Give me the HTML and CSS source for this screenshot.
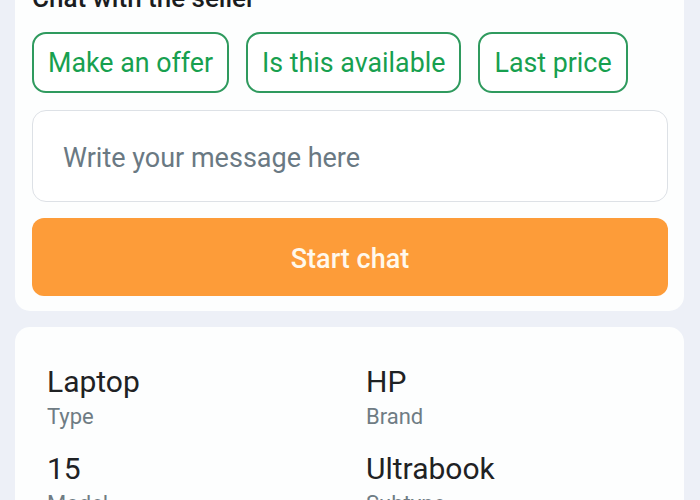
FILE: index.html
```html
<!DOCTYPE html>
<html lang="en">
<head>
<meta charset="utf-8">
<title>Chat with the seller</title>
<link rel="stylesheet" href="styles.css">
</head>
<body>
<main class="page">
  <section class="card chat-card">
    <h2 class="chat-title">Chat with the seller</h2>
    <div class="chips">
      <button class="chip" type="button">Make an offer</button>
      <button class="chip" type="button">Is this available</button>
      <button class="chip" type="button">Last price</button>
    </div>
    <textarea class="message" rows="1" placeholder="Write your message here"></textarea>
    <button class="start-btn" type="button">Start chat</button>
  </section>
  <section class="card specs-card">
    <div class="spec">
      <div class="spec-value">Laptop</div>
      <div class="spec-label">Type</div>
    </div>
    <div class="spec">
      <div class="spec-value">HP</div>
      <div class="spec-label">Brand</div>
    </div>
    <div class="spec">
      <div class="spec-value">15</div>
      <div class="spec-label">Model</div>
    </div>
    <div class="spec">
      <div class="spec-value">Ultrabook</div>
      <div class="spec-label">Subtype</div>
    </div>
  </section>
</main>
</body>
</html>
```
FILE: styles.css
```css
* { box-sizing: border-box; }

html, body {
  margin: 0;
  padding: 0;
  background: #edf0f7;
  font-family: Roboto, "Liberation Sans", Arial, sans-serif;
  overflow: hidden;
}

.page {
  padding: 0 16px 0 15px;
  display: flex;
  flex-direction: column;
  gap: 16px;
}

.card {
  background: #fdfefe;
  border-radius: 15px;
}

.chat-card {
  margin-top: -33px;
  padding: 16px 16px 15px 17px;
  display: flex;
  flex-direction: column;
}

.chat-title {
  margin: 0 0 19px;
  font-size: 26px;
  line-height: 30px;
  font-weight: 500;
  color: #1b1d1f;
}

.chips {
  display: flex;
  gap: 17px;
  margin-bottom: 17px;
}

.chip {
  height: 61px;
  padding: 0 14px;
  border: 2px solid #2f9a5e;
  border-radius: 14px;
  background: #ffffff;
  color: #17a04f;
  font-family: inherit;
  font-size: 26.8px;
  line-height: 30px;
  font-weight: 400;
}

.message {
  display: block;
  width: 100%;
  height: 92px;
  padding: 32px 30px 0;
  border: 1.5px solid #dde1e6;
  border-radius: 14px;
  background: #ffffff;
  font-family: inherit;
  font-size: 27px;
  line-height: 30px;
  color: #1b1d1f;
  resize: none;
  overflow: hidden;
  margin-bottom: 16px;
}

.message::placeholder {
  color: #6a7983;
  opacity: 1;
}

.start-btn {
  height: 78px;
  width: 100%;
  padding: 3px 0 0;
  border: none;
  border-radius: 12px;
  background: #fd9c39;
  color: #fff8ec;
  font-family: inherit;
  font-size: 27px;
  font-weight: 500;
}

.specs-card {
  padding: 37px 16px 30px 32px;
  display: grid;
  grid-template-columns: 319px 1fr;
  row-gap: 20px;
}

.spec-value {
  font-size: 30px;
  line-height: 36px;
  color: #1f2224;
}

.spec-label {
  margin-top: 3px;
  font-size: 22px;
  line-height: 28px;
  color: #6f7c84;
}
```
